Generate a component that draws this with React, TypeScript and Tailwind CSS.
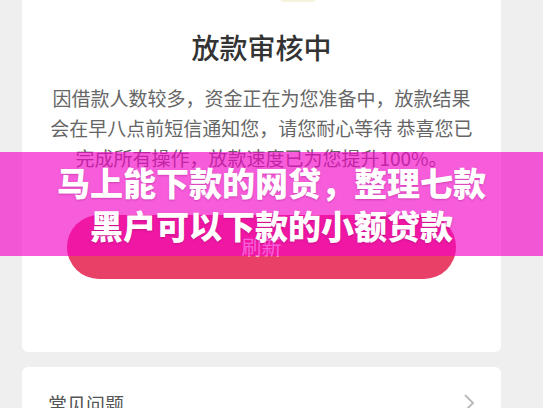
import React from "react";

export default function App() {
  return (
    <div
      className="relative h-[408px] w-[543px] overflow-hidden bg-[#efefef]"
      style={{ fontFamily: '"Noto Sans CJK SC", "Noto Sans", sans-serif' }}
    >
      <div className="ml-[22px] w-[479px] rounded-b-[6px] bg-white pb-[73px] pt-[29px]">
        <div className="relative">
          <div className="absolute left-[256px] top-[-40px] h-[13px] w-[40px] rounded-full bg-[#f6f3dc]" />
        </div>
        <h1 className="text-center text-[28px] font-medium leading-[36px] text-[#333333]">
          放款审核中
        </h1>
        <p className="mt-[18px] text-center text-[19px] leading-[30px] text-[#666666]">
          因借款人数较多，资金正在为您准备中，放款结果
          <br />
          会在早八点前短信通知您，请您耐心等待 恭喜您已
          <br />
          完成所有操作，放款速度已为您提升100%。
        </p>
        <div className="mt-[42px] flex justify-center">
          <button className="flex h-[64px] w-[389px] items-center justify-center rounded-full bg-[#e94068] text-[20px] text-white">
            刷新
          </button>
        </div>
      </div>
      <div className="ml-[22px] mt-[15px] flex h-[80px] w-[479px] items-start justify-between rounded-t-[6px] bg-white px-[26px] pt-[22px]">
        <span className="text-[19px] leading-[30px] text-[#555555]">常见问题</span>
        <svg width="12" height="20" viewBox="0 0 12 20" className="mt-[4px]">
          <path d="M2 2 L10 10 L2 18" fill="none" stroke="#bbbbbb" strokeWidth="2" />
        </svg>
      </div>
      <div className="absolute left-0 top-[152px] flex h-[104px] w-[543px] flex-col items-center justify-center bg-[rgba(243,0,197,0.64)]">
        <div className="text-center text-[33px] font-black leading-[43px] text-white [text-shadow:0_1px_2px_rgba(120,0,90,0.3)]">
          马上能下款的网贷，整理七款
          <br />
          黑户可以下款的小额贷款
        </div>
      </div>
    </div>
  );
}
